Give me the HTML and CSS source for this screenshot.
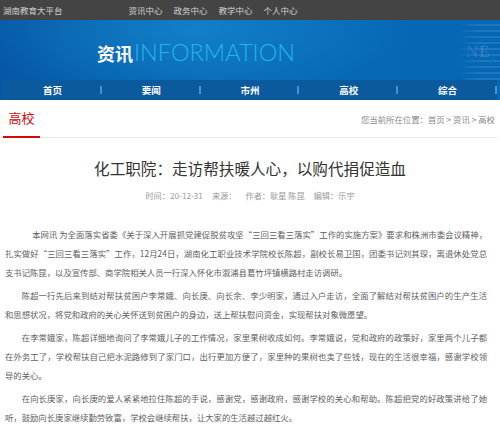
FILE: index.html
```html
<!DOCTYPE html>
<html>

	<head>
		<meta charset="UTF-8">
		<title>化工职院：走访帮扶暖人心，以购代捐促造血</title>
		<link rel="stylesheet" href="styles.css">
	</head>

	<body>
		<div class="topbar">
			<span class="site">湖南教育大平台</span>
			<ul class="toplinks">
				<li><a href="javascript:;">资讯中心</a></li>
				<li><a href="javascript:;">政务中心</a></li>
				<li><a href="javascript:;">教学中心</a></li>
				<li><a href="javascript:;">个人中心</a></li>
			</ul>
		</div>
		<div class="banner">
			<div class="banner-deco">NE</div>
			<h1 class="banner-title"><b>资讯</b><span>INFORMATION</span></h1>
			<ul class="nav">
				<li class="nav-item"><a href="javascript:;">首页</a></li>
				<li class="nav-item"><a href="javascript:;">要闻</a></li>
				<li class="nav-item"><a href="javascript:;">市州</a></li>
				<li class="nav-item"><a href="javascript:;">高校</a></li>
				<li class="nav-item"><a href="javascript:;">综合</a></li>
			</ul>
		</div>
		<div class="main">
			<div class="crumb-bar">
				<h2 class="tab">高校</h2>
				<p class="crumb">您当前所在位置：<a href="javascript:;">首页</a> &gt; <a href="javascript:;">资讯</a> &gt; <a href="javascript:;">高校</a></p>
			</div>
			<h3 class="article-title">化工职院：走访帮扶暖人心，以购代捐促造血</h3>
			<div class="meta">
				<span>时间：20-12-31</span>
				<span>来源：</span>
				<span>作者：耿星 陈昆</span>
				<span>编辑：乐宇</span>
			</div>
			<div class="article">
				<p class="lead">本网讯 为全面落实省委《关于深入开展抓党建促脱贫攻坚“三回三看三落实”工作的实施方案》要求和株洲市委会议精神，扎实做好“三回三看三落实”工作，12月24日，湖南化工职业技术学院校长陈超，副校长易卫国，团委书记刘其琛，离退休处党总支书记陈昆，以及宣传部、商学院相关人员一行深入怀化市溆浦县葛竹坪镇横路村走访调研。</p>
				<p>陈超一行先后来到结对帮扶贫困户李常娥、向长庚、向长余、李少明家，通过入户走访，全面了解结对帮扶贫困户的生产生活和思想状况，将党和政府的关心关怀送到贫困户的身边，送上帮扶慰问资金，实现帮扶对象微愿望。</p>
				<p>在李常娥家，陈超详细地询问了李常娥儿子的工作情况，家里果树收成如何。李常娥说，党和政府的政策好，家里两个儿子都在外务工了，学校帮扶自己把水泥路修到了家门口，出行更加方便了，家里种的果树也卖了些钱，现在的生活很幸福，感谢学校领导的关心。</p>
				<p>在向长庚家，向长庚的爱人紧紧地拉住陈超的手说，感谢党，感谢政府，感谢学校的关心和帮助。陈超把党的好政策讲给了她听，鼓励向长庚家继续勤劳致富，学校会继续帮扶，让大家的生活越过越红火。</p>
			</div>
		</div>
	</body>

</html>
```

FILE: styles.css
```css
body {
	margin: 0;
	font-family: "Noto Sans CJK SC", "Liberation Sans", sans-serif;
	background-color: #fff;
}

a {
	color: inherit;
	text-decoration: none;
}

ul {
	padding: 0;
	margin: 0;
	list-style-type: none;
}

h1, h2, h3, p {
	margin: 0;
	font-weight: normal;
}

/* 顶部条 */
.topbar {
	display: flex;
	align-items: center;
	height: 20px;
	padding-left: 3px;
	background-color: #444;
	color: #d2d2d2;
	font-size: 8.5px;
}

.toplinks {
	display: flex;
	gap: 11px;
	margin-left: 66px;
}

/* 横幅 */
.banner {
	position: relative;
	overflow: hidden;
	padding: 0 3px;
	background: radial-gradient(ellipse 220px 70px at 190px 10px, rgba(30, 150, 220, .5), rgba(30, 150, 220, 0)),
		linear-gradient(90deg, #0658a6 0%, #0769b6 40%, #0667b5 100%);
}

.banner-deco {
	position: absolute;
	top: 4px;
	right: 0;
	width: 44px;
	height: 56px;
	padding-left: 10px;
	box-sizing: border-box;
	font-family: "Liberation Serif", serif;
	font-size: 17px;
	line-height: 56px;
	letter-spacing: 1px;
	color: rgba(120, 170, 225, .4);
	background: repeating-linear-gradient(180deg, rgba(130, 175, 225, .22) 0, rgba(130, 175, 225, .22) 2px, rgba(0, 0, 0, 0) 2px, rgba(0, 0, 0, 0) 6px);
	-webkit-mask-image: linear-gradient(90deg, transparent 0, #000 55%);
	border-radius: 10px 0 0 10px;
}

.banner-title {
	display: flex;
	align-items: baseline;
	height: 60px;
	padding-left: 94px;
	line-height: 64px;
	color: #fff;
}

.banner-title b {
	font-size: 18px;
	font-weight: bold;
}

.banner-title span {
	margin-left: 1px;
	font-family: Lato, "Open Sans", sans-serif;
	font-weight: 300;
	font-size: 23.5px;
	color: #22b6ea;
}

.nav {
	display: flex;
	height: 20px;
	background-color: #0b5a9d;
}

.nav-item {
	flex: 1;
	text-align: center;
	line-height: 20px;
	font-size: 9.5px;
	font-weight: bold;
	color: #fff;
	background: linear-gradient(#3c95df, #3c95df) right center / 2px 8px no-repeat;
}

/* 正文 */
.main {
	padding: 0 3px;
}

.crumb-bar {
	display: flex;
	justify-content: space-between;
	align-items: stretch;
	height: 36px;
	padding-top: 1px;
	border-bottom: 1px solid #e8e8e8;
}

.tab {
	width: 37px;
	margin-bottom: -1px;
	border-bottom: 2px solid #d00a0a;
	text-align: center;
	line-height: 34px;
	font-size: 13px;
	color: #d00a0a;
}

.crumb {
	padding-right: 2px;
	line-height: 36px;
	font-size: 8.4px;
	color: #888;
}

.article-title {
	margin-top: 20px;
	text-align: center;
	line-height: 20px;
	font-size: 15.6px;
	color: #333;
}

.meta {
	display: flex;
	justify-content: center;
	gap: 9px;
	margin-top: 11px;
	line-height: 12px;
	font-size: 8.2px;
	color: #999;
}

.article {
	width: 482px;
	margin-top: 24px;
	padding-left: 2px;
}

.article p {
	margin-bottom: 4px;
	text-indent: 2em;
	text-align: justify;
	line-height: 19px;
	font-size: 8.35px;
	color: #5e5e5e;
}

.article .lead {
	text-indent: 3.25em;
}
```
